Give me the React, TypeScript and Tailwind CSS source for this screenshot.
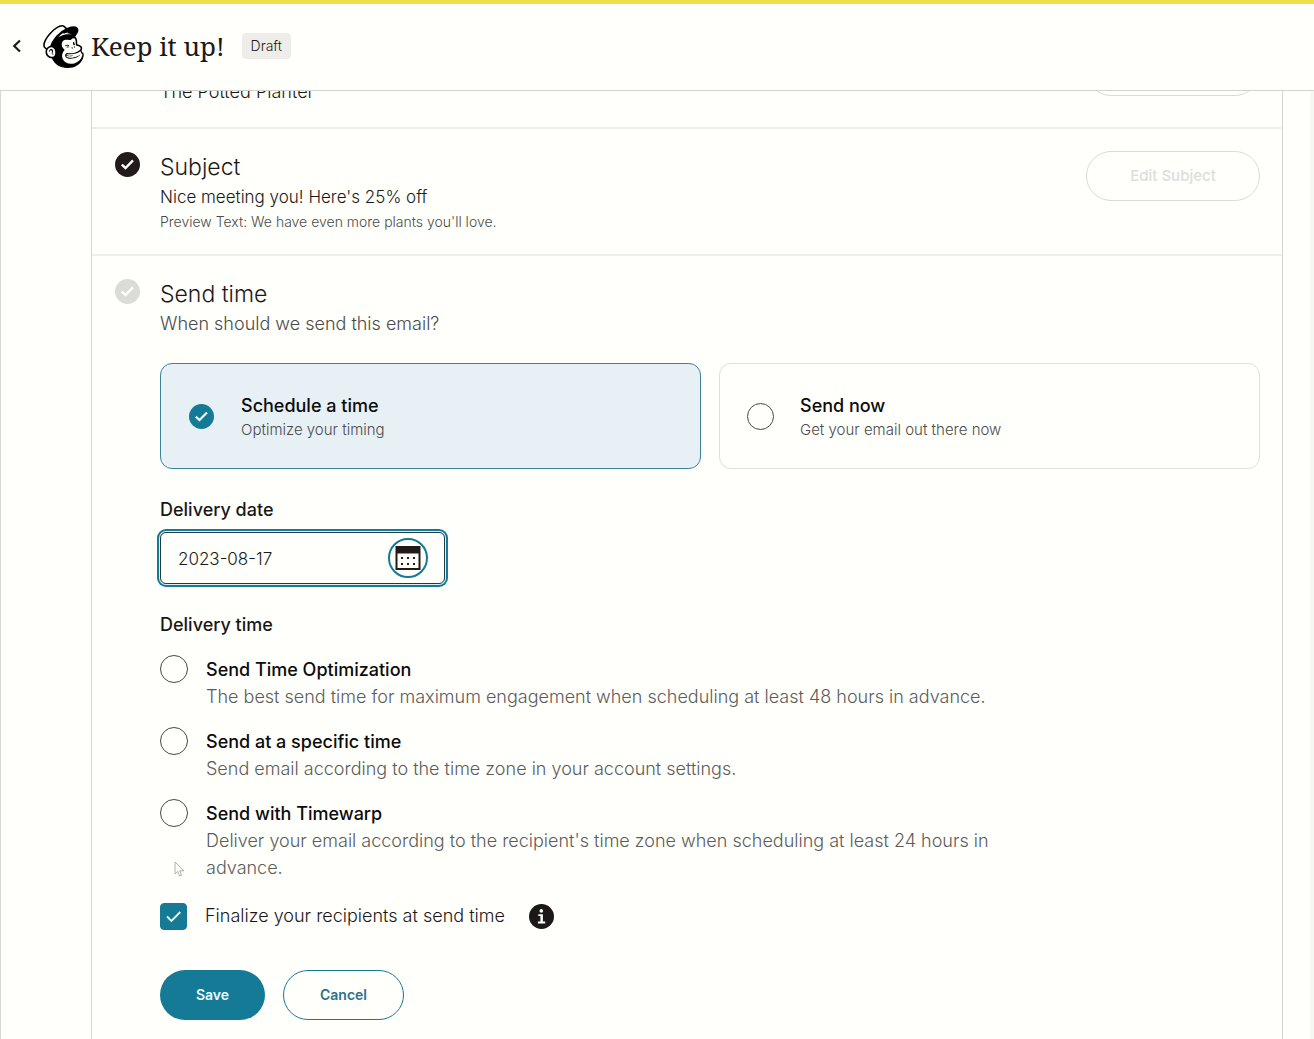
import { useState } from "react";
import { SiMailchimp } from "react-icons/si";

const deliveryOptions = [
  {
    id: "optimized",
    title: "Send Time Optimization",
    text: "The best send time for maximum engagement when scheduling at least 48 hours in advance.",
  },
  {
    id: "specific",
    title: "Send at a specific time",
    text: "Send email according to the time zone in your account settings.",
  },
  {
    id: "timewarp",
    title: "Send with Timewarp",
    text: "Deliver your email according to the recipient's time zone when scheduling at least 24 hours in advance.",
  },
];

function StepCheck({ done }: { done: boolean }) {
  return (
    <svg
      viewBox="0 0 25 25"
      className={done ? "mt-px size-[25px] shrink-0 text-[#211c1b]" : "mt-px size-[25px] shrink-0 text-[#dcdcd7]"}
      aria-hidden="true"
    >
      <circle cx="12.5" cy="12.5" r="12.5" fill="currentColor" />
      <path d="M6.8 12.6l3.7 3.4L18 8.4" fill="none" stroke="#fffffc" strokeWidth="2.4" />
    </svg>
  );
}

function PillButton({ children }: { children: string }) {
  return (
    <button
      type="button"
      disabled
      className="h-[50px] w-[174px] shrink-0 rounded-full border border-[#d8dbd7] text-[15px] font-medium text-[#dcdedb]"
    >
      {children}
    </button>
  );
}

function Header() {
  return (
    <header className="flex h-[91px] items-center border-t-4 border-b border-t-[#efdf4a] border-b-[#cfd2ce] pb-0.5 pl-[9px]">
      <button type="button" aria-label="Back" className="flex h-8 w-4 items-center justify-center">
        <svg viewBox="0 0 10 14" className="h-3.5 w-2.5" fill="none" stroke="#1c1a19" strokeWidth="2.2">
          <path d="M8 1.5L2.2 7L8 12.5" />
        </svg>
      </button>
      <SiMailchimp className="ml-[17px] size-[43px] text-black" aria-label="Mailchimp" />
      <h1 className="ml-1.5 font-['Noto_Serif','Liberation_Serif',serif] text-[26px] leading-9 text-[#1c1a19]">
        Keep it up!
      </h1>
      <span className="ml-[17px] rounded bg-[#efedea] px-[9px] py-[3px] text-sm leading-5 font-light text-[#1f1c1b]">
        Draft
      </span>
    </header>
  );
}

function SendChoice({
  title,
  text,
  checked,
  onSelect,
}: {
  title: string;
  text: string;
  checked: boolean;
  onSelect: () => void;
}) {
  return (
    <label
      className={
        checked
          ? "flex h-[106px] items-center rounded-xl border border-[#3b8396] bg-[#e7f0f4] pl-[26px]"
          : "flex h-[106px] items-center rounded-xl border border-[#dde0dc] pl-[26px]"
      }
    >
      <span className="grid size-7 place-items-center">
        <input
          type="radio"
          name="when"
          checked={checked}
          onChange={onSelect}
          className="col-start-1 row-start-1 size-[27px] appearance-none rounded-full border border-[#4a4746] checked:size-[25px] checked:border-0 checked:bg-[#157a95]"
        />
        {checked && (
          <svg viewBox="0 0 25 25" className="pointer-events-none col-start-1 row-start-1 size-[25px]" aria-hidden="true">
            <path d="M6.8 12.6l3.7 3.4L18 8.4" fill="none" stroke="#e9fbff" strokeWidth="2.2" />
          </svg>
        )}
      </span>
      <span className="ml-[26px] flex flex-col pt-1">
        <span className="text-lg leading-6 font-medium text-[#0d0b0b]">{title}</span>
        <span className="text-[15px] leading-6 font-light text-[#4b4b4a]">{text}</span>
      </span>
    </label>
  );
}

function CalendarIcon() {
  return (
    <svg viewBox="0 0 26 26" className="size-[26px]" aria-hidden="true">
      <rect x="0.5" y="1" width="25" height="24" fill="#211a19" />
      <rect x="2.5" y="8.5" width="21" height="14.5" fill="#fffffc" />
      <g fill="#211a19">
        <rect x="6" y="12" width="2" height="2" />
        <rect x="12" y="12" width="2" height="2" />
        <rect x="18" y="12" width="2" height="2" />
        <rect x="6" y="18" width="2" height="2" />
        <rect x="12" y="18" width="2" height="2" />
        <rect x="18" y="18" width="2" height="2" />
      </g>
    </svg>
  );
}

export default function App() {
  const [when, setWhen] = useState("schedule");
  const [date, setDate] = useState("2023-08-17");
  const [delivery, setDelivery] = useState("");
  const [finalize, setFinalize] = useState(true);

  return (
    <div className="flex min-h-screen flex-col bg-[#fffffc] font-['Inter','Liberation_Sans',sans-serif] text-[#1a1817]">
      <Header />
      <main className="flex flex-1 flex-col border-r-4 border-l border-r-[#f6f6f3] border-l-[#d5d8d4] pr-[27px] pl-[90px]">
        <div className="flex flex-1 flex-col border-x border-[#d2d5d1]">
          {/* tail of the From step, scrolled under the header */}
          <section className="flex h-[38px] items-end justify-between overflow-hidden border-b-2 border-[#eeefeb] pr-[22px] pl-[68px]">
            <p className="pb-[23px] text-lg leading-6 font-light text-[#1a1817]">The Potted Planter</p>
            <div className="pb-[31px]">
              <PillButton>Edit From</PillButton>
            </div>
          </section>

          <section className="flex h-[127px] items-start border-b-2 border-[#eeefeb] pt-[22px] pr-[22px] pl-[23px]">
            <StepCheck done />
            <div className="ml-5 flex-1 pt-px">
              <h2 className="text-[23px] leading-[30px] font-light">Subject</h2>
              <p className="text-[17px] leading-[30px] font-light">Nice meeting you! Here's 25% off</p>
              <p className="text-sm leading-5 font-light text-[#4b4b4a]">
                Preview Text: We have even more plants you'll love.
              </p>
            </div>
            <PillButton>Edit Subject</PillButton>
          </section>

          <section className="flex items-start pt-[22px] pr-[22px] pb-5 pl-[23px]">
            <StepCheck done={false} />
            <form className="ml-5 flex-1 pt-px" onSubmit={(e) => e.preventDefault()}>
              <h2 className="text-[23px] leading-[30px] font-light">Send time</h2>
              <p className="text-lg leading-[30px] font-light text-[#4b4b4a]">When should we send this email?</p>

              <div className="mt-6 grid grid-cols-2 gap-[18px]">
                <SendChoice
                  title="Schedule a time"
                  text="Optimize your timing"
                  checked={when === "schedule"}
                  onSelect={() => setWhen("schedule")}
                />
                <SendChoice
                  title="Send now"
                  text="Get your email out there now"
                  checked={when === "now"}
                  onSelect={() => setWhen("now")}
                />
              </div>

              <label htmlFor="delivery-date" className="mt-[27px] block text-lg leading-7 font-medium">
                Delivery date
              </label>
              <div className="mt-2 flex h-[52px] w-[285px] items-center rounded-md border border-[#1d3b45] pr-4 pl-[17px] shadow-[0_0_0_1px_#e4eff2,0_0_0_3px_#157a95]">
                <input
                  id="delivery-date"
                  type="text"
                  value={date}
                  onChange={(e) => setDate(e.target.value)}
                  className="min-w-0 flex-1 bg-transparent pt-px text-[17px] leading-6 font-light outline-none"
                />
                <button
                  type="button"
                  aria-label="Choose date"
                  className="grid size-10 place-items-center rounded-full border-2 border-[#157a95]"
                >
                  <CalendarIcon />
                </button>
              </div>

              <fieldset className="mt-[27px]">
                <legend className="text-lg leading-7 font-medium">Delivery time</legend>
                <div className="mt-4 flex flex-col gap-[17px]">
                  {deliveryOptions.map((o) => (
                    <label key={o.id} className="relative flex items-start">
                      <input
                        type="radio"
                        name="delivery"
                        checked={delivery === o.id}
                        onChange={() => setDelivery(o.id)}
                        className="size-7 shrink-0 appearance-none rounded-full border border-[#4a4746] checked:border-8 checked:border-[#157a95]"
                      />
                      <span className="ml-[18px] block max-w-[800px] pt-px text-lg leading-[27px]">
                        <span className="block font-medium text-[#0d0b0b]">{o.title}</span>
                        <span className="block font-light text-[#5c5c5a]">{o.text}</span>
                      </span>
                      {o.id === "timewarp" && (
                        <svg viewBox="0 0 12 16" className="absolute bottom-1 left-3.5 h-4 w-3" aria-hidden="true">
                          <path
                            d="M1 1v12l2.8-2.6L5.6 15l2-.8-1.8-4.4H10z"
                            fill="#fffffc"
                            stroke="#a5a5a3"
                            strokeWidth="0.9"
                          />
                        </svg>
                      )}
                    </label>
                  ))}
                </div>
              </fieldset>

              <div className="mt-[21px] flex items-center">
                <span className="grid">
                  <input
                    id="finalize"
                    type="checkbox"
                    checked={finalize}
                    onChange={(e) => setFinalize(e.target.checked)}
                    className="col-start-1 row-start-1 size-[27px] appearance-none rounded-sm border border-[#4a4746] checked:border-[#157a95] checked:bg-[#157a95]"
                  />
                  {finalize && (
                    <svg viewBox="0 0 27 27" className="pointer-events-none col-start-1 row-start-1 size-[27px]" aria-hidden="true">
                      <path d="M7 13.5l4.4 4.4L20.3 9" fill="none" stroke="#e9fbff" strokeWidth="1.8" />
                    </svg>
                  )}
                </span>
                <label htmlFor="finalize" className="ml-[18px] text-lg leading-7 font-light">
                  Finalize your recipients at send time
                </label>
                <button type="button" aria-label="More information" className="ml-6">
                  <svg viewBox="0 0 25 25" className="size-[25px]" aria-hidden="true">
                    <circle cx="12.5" cy="12.5" r="12.5" fill="#1c1817" />
                    <circle cx="12.3" cy="6.9" r="1.8" fill="#fffffc" />
                    <path d="M9.3 10.2h4.6v7.4h2.3v1.8H8.9v-1.8h2.5V12H9.3z" fill="#fffffc" />
                  </svg>
                </button>
              </div>

              <div className="mt-10 flex gap-[18px]">
                <button
                  type="submit"
                  className="h-[50px] w-[105px] rounded-full bg-[#157a95] text-sm font-semibold text-[#eafcff]"
                >
                  Save
                </button>
                <button
                  type="button"
                  className="h-[50px] w-[121px] rounded-full border border-[#157a95] text-sm font-semibold text-[#2a7389]"
                >
                  Cancel
                </button>
              </div>
            </form>
          </section>
        </div>
      </main>
    </div>
  );
}
